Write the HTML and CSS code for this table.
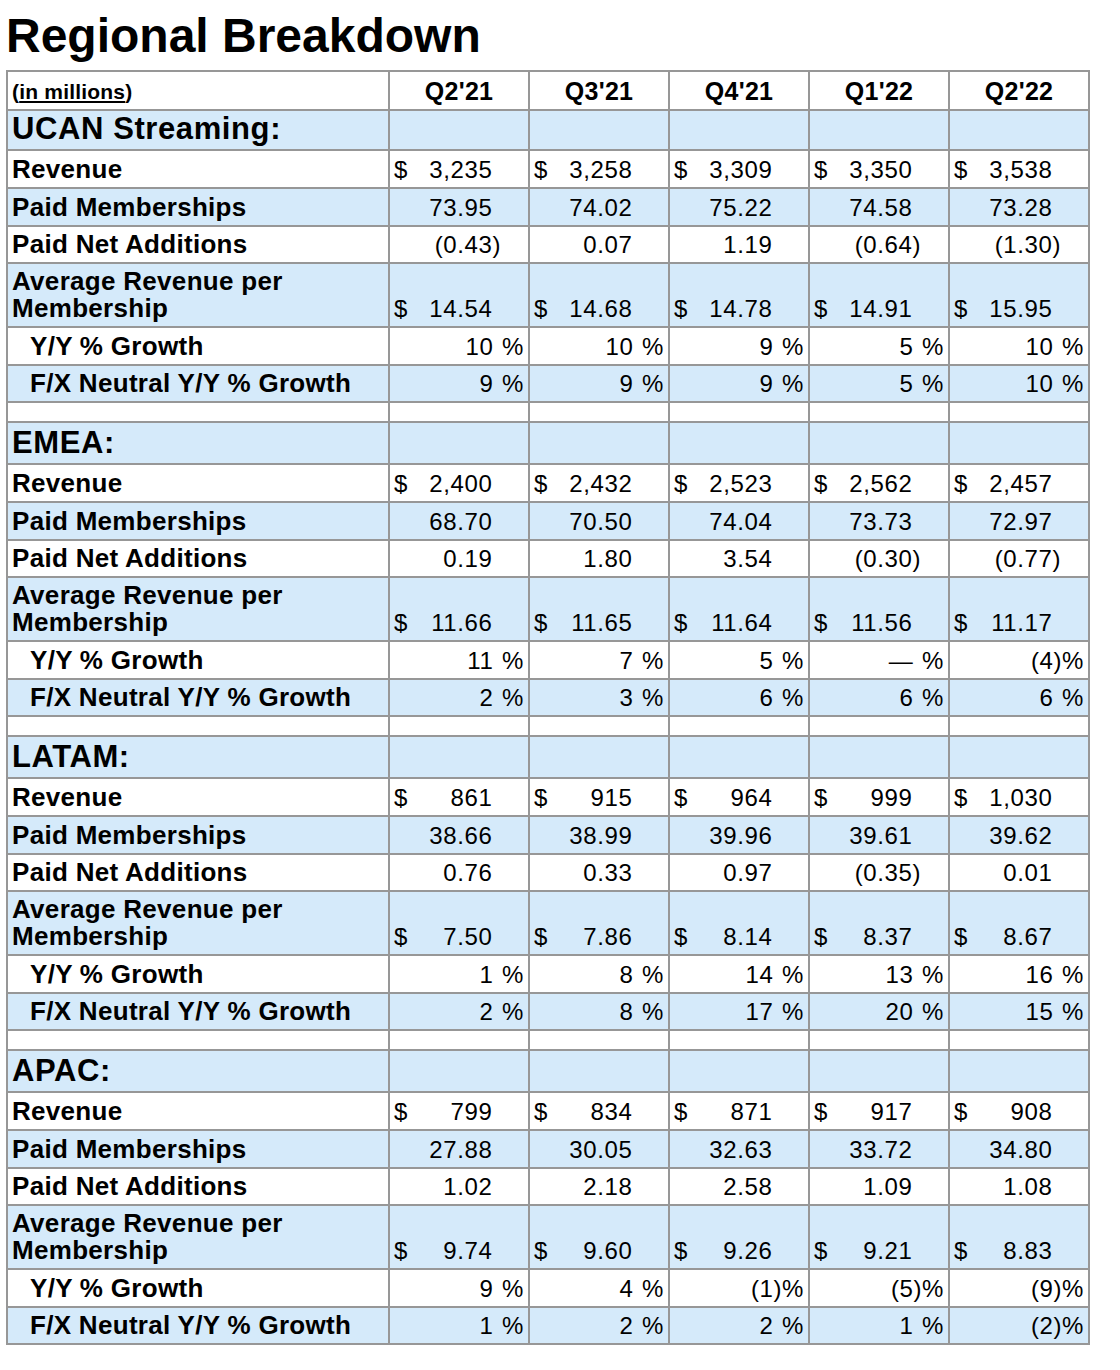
FILE: index.html
```html
<!DOCTYPE html>
<html lang="en">
<head>
<meta charset="utf-8">
<title>Regional Breakdown</title>
<link rel="stylesheet" href="styles.css">
</head>
<body>
<h1 class="title">Regional Breakdown</h1>
<table class="grid">
<tbody>
<tr class="hdr">
  <td class="lbl c0"><span class="unit">(<u>in millions</u>)</span></td>
  <td class="q c1">Q2'21</td><td class="q c1">Q3'21</td><td class="q c1">Q4'21</td><td class="q c1">Q1'22</td><td class="q c1">Q2'22</td>
</tr>

<tr class="sec first b"><td class="lbl st">UCAN Streaming:</td><td></td><td></td><td></td><td></td><td></td></tr>
<tr class="r38"><td class="lbl">Revenue</td>
  <td class="n"><span class="d">$</span>3,235<i class="h">)</i></td>
  <td class="n"><span class="d">$</span>3,258<i class="h">)</i></td>
  <td class="n"><span class="d">$</span>3,309<i class="h">)</i></td>
  <td class="n"><span class="d">$</span>3,350<i class="h">)</i></td>
  <td class="n"><span class="d">$</span>3,538<i class="h">)</i></td></tr>
<tr class="r38 b"><td class="lbl">Paid Memberships</td>
  <td class="n">73.95<i class="h">)</i></td><td class="n">74.02<i class="h">)</i></td><td class="n">75.22<i class="h">)</i></td><td class="n">74.58<i class="h">)</i></td><td class="n">73.28<i class="h">)</i></td></tr>
<tr class="r37"><td class="lbl">Paid Net Additions</td>
  <td class="n">(0.43)</td><td class="n">0.07<i class="h">)</i></td><td class="n">1.19<i class="h">)</i></td><td class="n">(0.64)</td><td class="n">(1.30)</td></tr>
<tr class="r64 b"><td class="lbl">Average Revenue per<br>Membership</td>
  <td class="n"><span class="d">$</span>14.54<i class="h">)</i></td>
  <td class="n"><span class="d">$</span>14.68<i class="h">)</i></td>
  <td class="n"><span class="d">$</span>14.78<i class="h">)</i></td>
  <td class="n"><span class="d">$</span>14.91<i class="h">)</i></td>
  <td class="n"><span class="d">$</span>15.95<i class="h">)</i></td></tr>
<tr class="r38"><td class="lbl ind">Y/Y % Growth</td>
  <td class="p">10<i class="h">)</i>%</td><td class="p">10<i class="h">)</i>%</td><td class="p">9<i class="h">)</i>%</td><td class="p">5<i class="h">)</i>%</td><td class="p">10<i class="h">)</i>%</td></tr>
<tr class="r37 b"><td class="lbl ind">F/X Neutral Y/Y % Growth</td>
  <td class="p">9<i class="h">)</i>%</td><td class="p">9<i class="h">)</i>%</td><td class="p">9<i class="h">)</i>%</td><td class="p">5<i class="h">)</i>%</td><td class="p">10<i class="h">)</i>%</td></tr>
<tr class="gap"><td></td><td></td><td></td><td></td><td></td><td></td></tr>

<tr class="sec b"><td class="lbl st">EMEA:</td><td></td><td></td><td></td><td></td><td></td></tr>
<tr class="r38"><td class="lbl">Revenue</td>
  <td class="n"><span class="d">$</span>2,400<i class="h">)</i></td>
  <td class="n"><span class="d">$</span>2,432<i class="h">)</i></td>
  <td class="n"><span class="d">$</span>2,523<i class="h">)</i></td>
  <td class="n"><span class="d">$</span>2,562<i class="h">)</i></td>
  <td class="n"><span class="d">$</span>2,457<i class="h">)</i></td></tr>
<tr class="r38 b"><td class="lbl">Paid Memberships</td>
  <td class="n">68.70<i class="h">)</i></td><td class="n">70.50<i class="h">)</i></td><td class="n">74.04<i class="h">)</i></td><td class="n">73.73<i class="h">)</i></td><td class="n">72.97<i class="h">)</i></td></tr>
<tr class="r37"><td class="lbl">Paid Net Additions</td>
  <td class="n">0.19<i class="h">)</i></td><td class="n">1.80<i class="h">)</i></td><td class="n">3.54<i class="h">)</i></td><td class="n">(0.30)</td><td class="n">(0.77)</td></tr>
<tr class="r64 b"><td class="lbl">Average Revenue per<br>Membership</td>
  <td class="n"><span class="d">$</span>11.66<i class="h">)</i></td>
  <td class="n"><span class="d">$</span>11.65<i class="h">)</i></td>
  <td class="n"><span class="d">$</span>11.64<i class="h">)</i></td>
  <td class="n"><span class="d">$</span>11.56<i class="h">)</i></td>
  <td class="n"><span class="d">$</span>11.17<i class="h">)</i></td></tr>
<tr class="r38"><td class="lbl ind">Y/Y % Growth</td>
  <td class="p">11<i class="h">)</i>%</td><td class="p">7<i class="h">)</i>%</td><td class="p">5<i class="h">)</i>%</td><td class="p">—<i class="h">)</i>%</td><td class="p">(4)%</td></tr>
<tr class="r37 b"><td class="lbl ind">F/X Neutral Y/Y % Growth</td>
  <td class="p">2<i class="h">)</i>%</td><td class="p">3<i class="h">)</i>%</td><td class="p">6<i class="h">)</i>%</td><td class="p">6<i class="h">)</i>%</td><td class="p">6<i class="h">)</i>%</td></tr>
<tr class="gap"><td></td><td></td><td></td><td></td><td></td><td></td></tr>

<tr class="sec b"><td class="lbl st">LATAM:</td><td></td><td></td><td></td><td></td><td></td></tr>
<tr class="r38"><td class="lbl">Revenue</td>
  <td class="n"><span class="d">$</span>861<i class="h">)</i></td>
  <td class="n"><span class="d">$</span>915<i class="h">)</i></td>
  <td class="n"><span class="d">$</span>964<i class="h">)</i></td>
  <td class="n"><span class="d">$</span>999<i class="h">)</i></td>
  <td class="n"><span class="d">$</span>1,030<i class="h">)</i></td></tr>
<tr class="r38 b"><td class="lbl">Paid Memberships</td>
  <td class="n">38.66<i class="h">)</i></td><td class="n">38.99<i class="h">)</i></td><td class="n">39.96<i class="h">)</i></td><td class="n">39.61<i class="h">)</i></td><td class="n">39.62<i class="h">)</i></td></tr>
<tr class="r37"><td class="lbl">Paid Net Additions</td>
  <td class="n">0.76<i class="h">)</i></td><td class="n">0.33<i class="h">)</i></td><td class="n">0.97<i class="h">)</i></td><td class="n">(0.35)</td><td class="n">0.01<i class="h">)</i></td></tr>
<tr class="r64 b"><td class="lbl">Average Revenue per<br>Membership</td>
  <td class="n"><span class="d">$</span>7.50<i class="h">)</i></td>
  <td class="n"><span class="d">$</span>7.86<i class="h">)</i></td>
  <td class="n"><span class="d">$</span>8.14<i class="h">)</i></td>
  <td class="n"><span class="d">$</span>8.37<i class="h">)</i></td>
  <td class="n"><span class="d">$</span>8.67<i class="h">)</i></td></tr>
<tr class="r38"><td class="lbl ind">Y/Y % Growth</td>
  <td class="p">1<i class="h">)</i>%</td><td class="p">8<i class="h">)</i>%</td><td class="p">14<i class="h">)</i>%</td><td class="p">13<i class="h">)</i>%</td><td class="p">16<i class="h">)</i>%</td></tr>
<tr class="r37 b"><td class="lbl ind">F/X Neutral Y/Y % Growth</td>
  <td class="p">2<i class="h">)</i>%</td><td class="p">8<i class="h">)</i>%</td><td class="p">17<i class="h">)</i>%</td><td class="p">20<i class="h">)</i>%</td><td class="p">15<i class="h">)</i>%</td></tr>
<tr class="gap"><td></td><td></td><td></td><td></td><td></td><td></td></tr>

<tr class="sec b"><td class="lbl st">APAC:</td><td></td><td></td><td></td><td></td><td></td></tr>
<tr class="r38"><td class="lbl">Revenue</td>
  <td class="n"><span class="d">$</span>799<i class="h">)</i></td>
  <td class="n"><span class="d">$</span>834<i class="h">)</i></td>
  <td class="n"><span class="d">$</span>871<i class="h">)</i></td>
  <td class="n"><span class="d">$</span>917<i class="h">)</i></td>
  <td class="n"><span class="d">$</span>908<i class="h">)</i></td></tr>
<tr class="r38 b"><td class="lbl">Paid Memberships</td>
  <td class="n">27.88<i class="h">)</i></td><td class="n">30.05<i class="h">)</i></td><td class="n">32.63<i class="h">)</i></td><td class="n">33.72<i class="h">)</i></td><td class="n">34.80<i class="h">)</i></td></tr>
<tr class="r37"><td class="lbl">Paid Net Additions</td>
  <td class="n">1.02<i class="h">)</i></td><td class="n">2.18<i class="h">)</i></td><td class="n">2.58<i class="h">)</i></td><td class="n">1.09<i class="h">)</i></td><td class="n">1.08<i class="h">)</i></td></tr>
<tr class="r64 b"><td class="lbl">Average Revenue per<br>Membership</td>
  <td class="n"><span class="d">$</span>9.74<i class="h">)</i></td>
  <td class="n"><span class="d">$</span>9.60<i class="h">)</i></td>
  <td class="n"><span class="d">$</span>9.26<i class="h">)</i></td>
  <td class="n"><span class="d">$</span>9.21<i class="h">)</i></td>
  <td class="n"><span class="d">$</span>8.83<i class="h">)</i></td></tr>
<tr class="r38"><td class="lbl ind">Y/Y % Growth</td>
  <td class="p">9<i class="h">)</i>%</td><td class="p">4<i class="h">)</i>%</td><td class="p">(1)%</td><td class="p">(5)%</td><td class="p">(9)%</td></tr>
<tr class="r37 b"><td class="lbl ind">F/X Neutral Y/Y % Growth</td>
  <td class="p">1<i class="h">)</i>%</td><td class="p">2<i class="h">)</i>%</td><td class="p">2<i class="h">)</i>%</td><td class="p">1<i class="h">)</i>%</td><td class="p">(2)%</td></tr>
</tbody>
</table>
</body>
</html>
```
FILE: styles.css
```css
* { box-sizing: border-box; }

body {
  margin: 0;
  padding: 8px 0 0 6px;
  background: #fff;
  color: #000;
  font-family: "Liberation Sans", Arial, Helvetica, sans-serif;
}

.title {
  margin: 0 0 6px;
  font-size: 48px;
  line-height: 56px;
  font-weight: bold;
}

.grid {
  border-collapse: separate;
  border-spacing: 0;
  table-layout: fixed;
  width: 1084px;
  border-left: 2px solid #979797;
  border-top: 2px solid #979797;
}

.grid td {
  border-right: 2px solid #979797;
  border-bottom: 2px solid #979797;
  padding: 0 4px 4px;
  vertical-align: bottom;
  font-size: 24px;
  line-height: 27px;
  white-space: nowrap;
  overflow: hidden;
}

.grid .c0 { width: 382px; }
.grid .c1 { width: 140px; }

.b td { background: #d5eafa; }

.hdr td { height: 39px; }
.sec td { height: 42px; }
.sec.first td { height: 40px; }
.r38 td { height: 38px; }
.r37 td { height: 37px; }
.r64 td { height: 64px; }
.gap td { height: 20px; }

.grid .lbl {
  font-weight: bold;
  font-size: 26px;
  letter-spacing: 0.3px;
  padding-left: 4px;
}

.grid .ind { padding-left: 22px; }

.grid .st {
  font-size: 31px;
  line-height: 34px;
  letter-spacing: 0.6px;
  padding-bottom: 3px;
}

.unit {
  font-size: 21px;
  letter-spacing: 0.2px;
}

.grid .q {
  text-align: center;
  font-weight: bold;
  font-size: 25px;
  letter-spacing: 0.3px;
}

.grid .n {
  text-align: right;
  padding-right: 27px;
  letter-spacing: 0.6px;
}

.grid .p {
  text-align: right;
  padding-right: 4px;
  letter-spacing: 0.6px;
}

.d {
  float: left;
}

.h {
  visibility: hidden;
  font-style: normal;
}
```
